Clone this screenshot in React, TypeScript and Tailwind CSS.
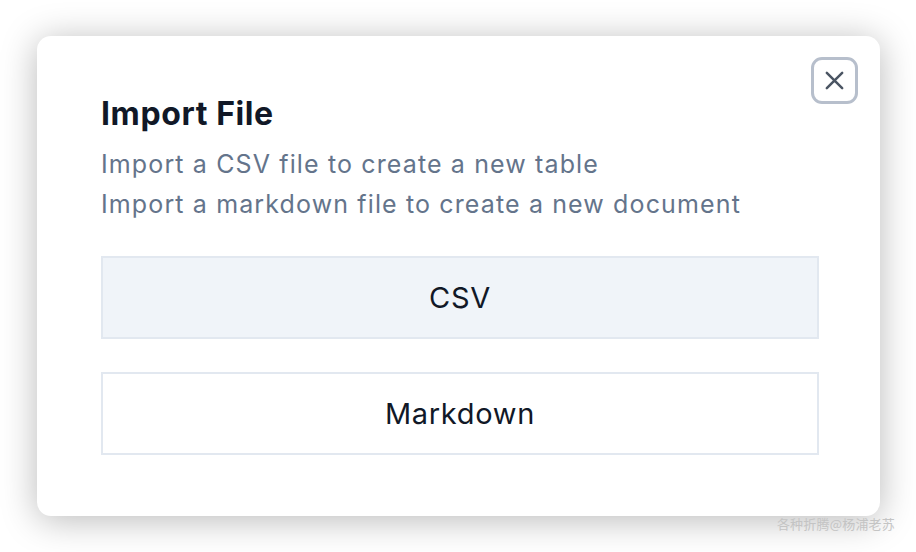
import React from 'react';

const options = ['CSV', 'Markdown'];

const App: React.FC = () => {
  return (
    <div className="relative w-[916px] h-[552px] bg-white overflow-hidden font-['Inter',sans-serif]">
      <div className="pt-[36px] pl-[37px]">
        <div className="relative w-[843px] h-[480px] bg-white rounded-[14px] shadow-[0_4px_36px_rgba(0,0,0,0.28)] px-[64px] pt-[58px]">
          <button className="absolute top-[21px] right-[22px] w-[47px] h-[47px] flex items-center justify-center rounded-[11px] border-[3px] border-[#b7bfcc] text-[#4b5563]">
            <svg width="23" height="23" viewBox="0 0 24 24" fill="none" stroke="currentColor" strokeWidth="2.6" strokeLinecap="round">
              <path d="M4 4L20 20M20 4L4 20" />
            </svg>
          </button>
          <h2 className="text-[32px] leading-[40px] font-bold text-[#111827] tracking-[0.6px]">Import File</h2>
          <div className="mt-[10px] text-[25px] leading-[40px] text-[#64748b] tracking-[1.13px]">
            <p>Import a CSV file to create a new table</p>
            <p>Import a markdown file to create a new document</p>
          </div>
          <div className="mt-[32px] flex flex-col gap-[33px] w-[718px]">
            {options.map((o, i) => (
              <button
                key={o}
                className={`h-[83px] border-2 border-[#e2e8f0] text-[29px] tracking-[0.7px] text-[#111827] ${i === 0 ? 'bg-[#f0f4f9]' : 'bg-white'}`}
              >
                {o}
              </button>
            ))}
          </div>
        </div>
      </div>
      <div className="absolute right-[21px] bottom-[19px] text-[13px] tracking-[0.2px] text-[#c4c4c4] font-['Noto_Sans_CJK_SC',sans-serif]">
        各种折腾@杨浦老苏
      </div>
    </div>
  );
};

export default App;
